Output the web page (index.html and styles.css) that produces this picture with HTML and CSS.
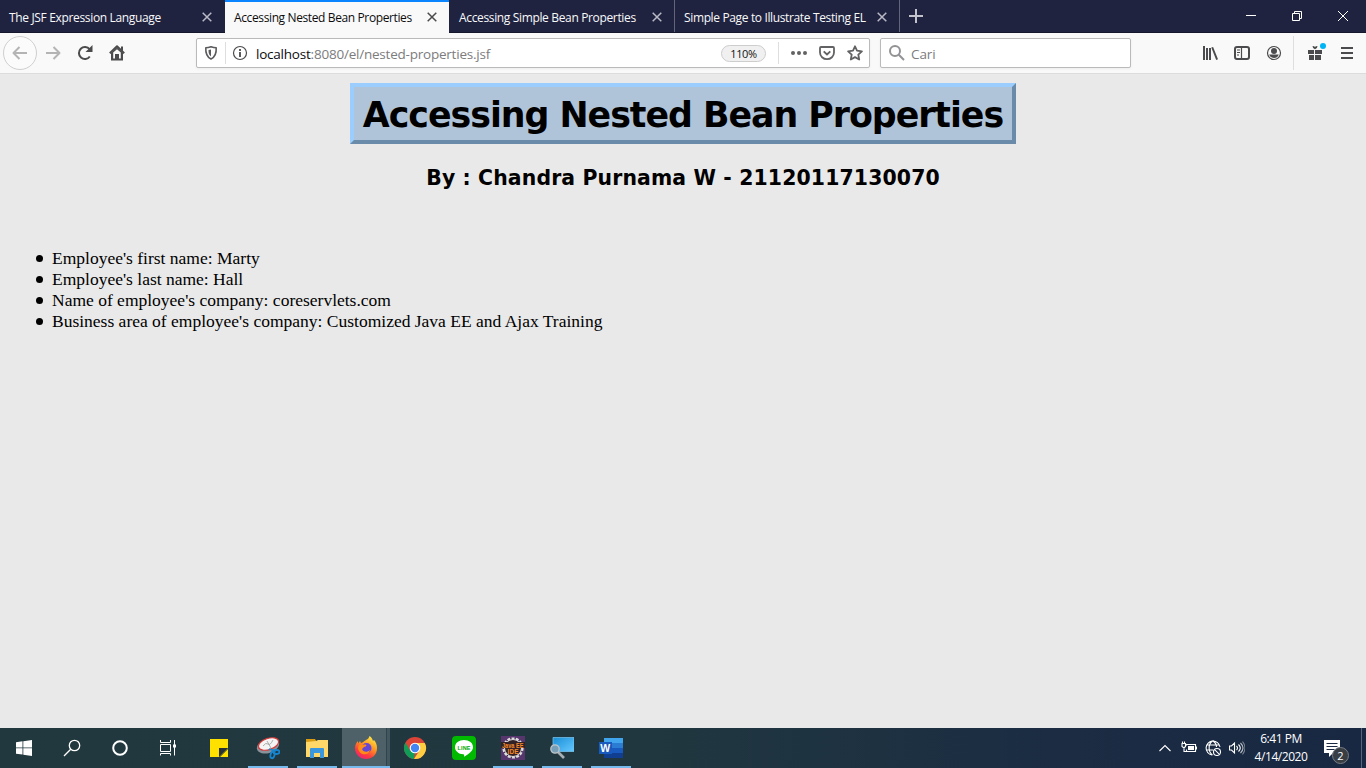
FILE: index.html
```html
<!DOCTYPE html>
<html lang="id">
<head>
<meta charset="utf-8">
<title>Accessing Nested Bean Properties</title>
<link rel="stylesheet" href="styles.css">
</head>
<body>
<header class="tabs">
  <div class="tab"><span class="tab-label t1">The JSF Expression Language</span><svg class="close" viewBox="0 0 10 10"><path d="M.7.7l8.600 8.600M9.300.7L.7 9.300"/></svg></div>
  <div class="tab active"><span class="tab-label t2">Accessing Nested Bean Properties</span><svg class="close" viewBox="0 0 10 10"><path d="M.7.7l8.600 8.600M9.300.7L.7 9.300"/></svg></div>
  <div class="tab"><span class="tab-label t3">Accessing Simple Bean Properties</span><svg class="close" viewBox="0 0 10 10"><path d="M.7.7l8.600 8.600M9.300.7L.7 9.300"/></svg></div>
  <div class="tab last"><span class="tab-label t4">Simple Page to Illustrate Testing EL</span><svg class="close" viewBox="0 0 10 10"><path d="M.7.7l8.600 8.600M9.300.7L.7 9.300"/></svg></div>
  <svg class="plus" viewBox="0 0 14 14"><path d="M7 0v14M0 7h14"/></svg>
  <div class="window-buttons">
    <svg viewBox="0 0 46 33"><path d="M18 15.500h10"/></svg>
    <svg viewBox="0 0 46 33"><path d="M18.500 13.500h7v7h-7zM20.500 13.500v-2h7v7h-2"/></svg>
    <svg viewBox="0 0 46 33"><path d="M18 11l10 10M28 11l-10 10"/></svg>
  </div>
</header>

<nav class="toolbar">
  <div class="nav-buttons">
    <span class="back"><svg class="i16" viewBox="0 0 16 16"><path class="line" d="M15 8H1.500M7.500 2L1.500 8l6 6"/></svg></span>
    <svg class="i16 faded" viewBox="0 0 16 16"><path class="line" d="M1 8h13.500M8.500 2l6 6-6 6"/></svg>
    <svg class="i16" viewBox="0 0 16 16"><path class="line" d="M12.800 11.500A6 6 0 1 1 12.600 4.200"/><path d="M15.500 0v7H8.500z"/></svg>
    <svg class="i16" viewBox="0 0 16 16"><path class="line" d="M.8 8.200L8 1.200l7.200 7"/><path fill-rule="evenodd" d="M2 8l6-5.500L14 8v7.500H2zM4.200 7.500v6H6V9h4v4.500h1.800v-6L8 4.300z"/><path d="M12 1.500h2v5l-2-2zM7 10.500h2v3H7z"/></svg>
  </div>
  <div class="urlbar">
    <svg class="i16 shield" viewBox="0 0 16 16"><path class="line" d="M8 1.800C6 2.500 4 2.800 2.800 2.800 2.500 8 3.500 12 8 14c4.500-2 5.500-6 5.200-11.200C12 2.800 10 2.500 8 1.800z"/><path d="M8 4.500v7C6 10 5.500 8.500 5.500 5 6.500 5 7.200 4.800 8 4.500z"/></svg>
    <span class="divider small"></span>
    <svg class="i16 info" viewBox="0 0 16 16"><circle class="thin" cx="8" cy="8" r="6.500"/><path d="M7 7h2v5H7zM7 4h2v2H7z"/></svg>
    <span class="url"><b>localhost</b>:8080/el/nested-properties.jsf</span>
    <span class="zoom"><span>110%</span></span>
    <span class="divider"></span>
    <svg class="i16 dots" viewBox="0 0 16 16"><circle cx="2" cy="8" r="2"/><circle cx="8" cy="8" r="2"/><circle cx="14" cy="8" r="2"/></svg>
    <svg class="i16 pocket" viewBox="0 0 16 16"><path class="line" d="M2 2h12q1 0 1 1v4.500a7 6.700 0 0 1-14 0V3q0-1 1-1z"/><path class="line" d="M4.700 6.300L8 9.500l3.300-3.200"/></svg>
    <svg class="i16 star" viewBox="0 0 16 16"><path class="line" d="M8 1.300l2 4.400 4.900.6-3.600 3.300.9 4.900L8 12.100l-4.200 2.400.9-4.900L1.100 6.300 6 5.700z"/></svg>
  </div>
  <div class="search">
    <svg class="i16 lens" viewBox="0 0 16 16"><circle class="line" cx="6" cy="6" r="5"/><path class="line" d="M9.800 9.800l5.200 5.200"/></svg>
    <span>Cari</span>
  </div>
  <div class="tools">
    <svg class="i16" viewBox="0 0 16 16"><path d="M1 1h2v14H1zM4 3h2v12H4zM7 3h2v12H7zM9.300 2.600l1.800-.6L16 14.300l-1.800.7z"/></svg>
    <svg class="i16" viewBox="0 0 16 16"><rect class="line" x="1" y="2" width="14" height="12" rx="2"/><path class="thin" d="M7.500 2v12M3 5h3M3 7.500h3M3 10h2"/></svg>
    <svg class="i16" viewBox="0 0 16 16"><circle class="thin" cx="8" cy="8" r="6.500"/><circle cx="8" cy="6" r="3"/><path d="M3.200 9.500h9.600C12 12 10 13 8 13s-4-1-4.800-3.500z"/></svg>
    <span class="divider tall"></span>
    <span class="gift"><svg class="i16" viewBox="0 0 16 16"><path d="M1 5h6v4H1zM8 5h7v4H8zM2 10h5v5H2zM8 10h6v5H8zM5.500 1q2 0 2.500 1 .5-1 2.500-1 0 2.500-2.500 3.200Q5.500 3.500 5.500 1z"/></svg></span>
    <svg class="i16" viewBox="0 0 16 16"><path class="line" d="M2 3h12M2 8h12M2 13h12"/></svg>
  </div>
</nav>

<main class="page">
  <h1 class="title"><span>Accessing Nested Bean Properties</span></h1>
  <h2 class="author">By : Chandra Purnama W - 21120117130070</h2>
  <ul class="facts">
    <li>Employee's first name: Marty</li>
    <li>Employee's last name: Hall</li>
    <li>Name of employee's company: coreservlets.com</li>
    <li>Business area of employee's company: Customized Java EE and Ajax Training</li>
  </ul>
</main>

<footer class="taskbar">
  <div class="system">
    <span class="task"><svg viewBox="0 0 24 24"><path fill="#fff" d="M4 6.200l6.500-.9v6.200H4zM11.300 5.200L20 4v7.500h-8.700zM4 12.300h6.500v6.300L4 17.700zM11.300 12.300H20V20l-8.700-1.200z"/></svg></span>
    <span class="task"><svg viewBox="0 0 24 24"><g fill="none" stroke="#fff" stroke-width="1.300"><circle cx="14.500" cy="9.500" r="5.200"/><path d="M10.700 13.300L4 20"/></g></svg></span>
    <span class="task"><svg viewBox="0 0 24 24"><circle cx="12" cy="12" r="6.800" fill="none" stroke="#fff" stroke-width="2"/></svg></span>
    <span class="task"><svg viewBox="0 0 24 24"><path fill="none" stroke="#fff" d="M4.500 4v2.500h10V4M4.500 19.500V17.500h10v2M4.500 8.500h10v7h-10zM18.500 4v15.500"/><path fill="#fff" d="M17 8.500h3v3h-3z"/></svg></span>
  </div>
  <div class="apps">
    <span class="task"><svg viewBox="0 0 24 24"><path fill="#ffe100" d="M3 3h18v9l-9 9H3z"/><path fill="#263238" d="M12 12h9l-9 9z"/><path fill="#ffe100" d="M13 21l8-8v8z"/></svg></span>
    <span class="task running"><svg viewBox="0 0 24 24"><ellipse cx="12" cy="10" rx="11.500" ry="7" transform="rotate(-18 12 10)" fill="#87929a"/><ellipse cx="12.500" cy="8" rx="10.500" ry="5.600" transform="rotate(-18 12.500 8)" fill="#f4f4f4" stroke="#d43b3b" stroke-width="1.200"/><path d="M7 10q3-4 5-2t5-4M11 5l4 7" fill="none" stroke="#999" stroke-width=".8"/><g fill="none" stroke="#1685cf" stroke-width="1.800"><path d="M13 13l7 2"/><ellipse cx="16.500" cy="19" rx="2" ry="3.300" transform="rotate(15 16.500 19)"/><ellipse cx="20.500" cy="16" rx="3" ry="2"/></g></svg></span>
    <span class="task running"><svg viewBox="0 0 24 24"><path fill="#d99b12" d="M1 3h9l2 3H1z"/><path fill="#ffd869" d="M1 6l10-1 2-1h10v17H1z"/><path fill="#3a96dd" d="M5 13q0-1 1-1h12q1 0 1 1v9h-4v-5H9v5H5z"/></svg></span>
    <span class="task running current"><svg viewBox="0 0 24 24"><defs><linearGradient id="fx" x1=".8" y1="0" x2=".25" y2="1"><stop offset="0" stop-color="#fff04a"/><stop offset=".4" stop-color="#ff9a20"/><stop offset=".75" stop-color="#ff3b3f"/><stop offset="1" stop-color="#e92278"/></linearGradient></defs><path fill="url(#fx)" d="M12 4c2-1 3-2 3.500-4 3 2 3 4 3.500 5l1-1c2 2 3 5 3 8 0 7-5 11-11 11S1 18.500 1 12c0-3 1-5 3-7v2.500L6 5l1 2c1 0 3-2 5-3z"/><circle cx="12.500" cy="12" r="5" fill="#6547d5"/><path fill="#ff8b19" d="M5 9l6-.5c2 0 2 2-1 2.500l-2 2c1 3 5 4 8 1-1 6-11 6-12-2z"/></svg></span>
    <span class="task"><svg viewBox="0 0 24 24"><circle cx="12" cy="12" r="11" fill="#db4437"/><path fill="#0f9d58" d="M2.500 6.500L7.200 14.800 12 17l-1 6A11 11 0 0 1 2.500 6.500z"/><path fill="#ffcd40" d="M12 7h9.800A11 11 0 0 1 11 23l5.500-8.500z"/><circle cx="12" cy="12" r="5.300" fill="#fff"/><circle cx="12" cy="12" r="4.200" fill="#4285f4"/></svg></span>
    <span class="task"><svg viewBox="0 0 24 24"><rect width="24" height="24" rx="4" fill="#00b900"/><path fill="#fff" d="M12 4c5.300 0 9 3 9 7.200 0 4-5.500 7.500-9 9.500.4-1.500.4-2.200-.8-2.400C6.500 18 3 15 3 11.200 3 7 7 4 12 4z"/><text class="line-logo" x="5.500" y="13.500" textLength="13">LINE</text></svg></span>
    <span class="task running"><svg viewBox="0 0 24 24"><rect width="24" height="24" fill="#57366e"/><circle cx="12" cy="12" r="9.500" fill="#332128" stroke="#ddd" stroke-width="2.200" stroke-dasharray="3 1.300"/><circle cx="12" cy="12" r="8.500" fill="none" stroke="#ddd"/><path fill="#332128" d="M0 6h24v6H0z"/><text class="ide-logo" x="1" y="11.500" textLength="21.500" lengthAdjust="spacingAndGlyphs">Java EE</text><text class="ide-logo" x="6.500" y="17.500" textLength="11">IDE</text></svg></span>
    <span class="task running"><svg viewBox="0 0 24 24"><defs><linearGradient id="screen" x2="1" y2="1"><stop stop-color="#198ed7"/><stop offset="1" stop-color="#66c8ff"/></linearGradient></defs><path fill="url(#screen)" stroke="#7bc9f2" stroke-width=".7" d="M3 1.500h21v14H3z"/><path d="M8 16l6 6" stroke="#a8afb3" stroke-width="2.600"/><circle cx="5" cy="13" r="4.200" fill="#779fb8" stroke="#bdc5ca" stroke-width="1.300"/></svg></span>
    <span class="task running"><svg viewBox="0 0 24 24"><path fill="#41a5ee" d="M5 2h19v5H5z"/><path fill="#2b7cd3" d="M5 7h19v5H5z"/><path fill="#185abd" d="M5 12h19v5H5z"/><path fill="#103f91" d="M5 17h19v5H5z"/><path fill="#185abd" d="M0 6h13v12H0z"/><text class="word-logo" x="1.200" y="15.700" textLength="10.500">W</text></svg></span>
  </div>
  <div class="tray">
    <svg class="i16" viewBox="0 0 16 16"><path d="M2.500 11L8 5.500l5.500 5.500"/></svg>
    <svg class="i16" viewBox="0 0 16 16"><path d="M5.500 5.500v-1h9v7h-9v-2M.5 3.500h4v3L3 8 1 6.500v-3M1.500 1.500v2M3.500 1.500v2M3 8v3.500h2.500"/><path fill="#fff" stroke="none" d="M7 6h6v4H7zM15 6.500h1v3h-1z"/></svg>
    <svg class="i16" viewBox="0 0 16 16"><path d="M7 15A7 7 0 1 1 15 7M7.500 1C3 4 3 12 7.500 15M8 1c3 2 3.500 4 3.500 6M1.500 5h13M1 10h7"/><circle cx="12" cy="12" r="3.500"/><path d="M9.600 9.600l4.800 4.800"/></svg>
    <svg class="i16" viewBox="0 0 16 16"><path d="M.5 6h2l3-3v10l-3-3h-2zM7.500 6q2 2 0 4M9.500 4.500q3.500 3.500 0 7"/><path opacity=".7" d="M11.500 3q5 5 0 10"/><path opacity=".4" d="M13.500 1.500q5 6.500 0 13"/></svg>
    <div class="clock"><span>6:41 PM</span><span>4/14/2020</span></div>
    <span class="notice"><svg viewBox="0 0 24 24"><path fill="#fff" d="M0 0h16v13H9l-4 4v-4H0z"/><path stroke="#1b2a43" d="M2.500 3.500h11M2.500 6.500h11M2.500 9.500h8"/></svg><b>2</b></span>
    <span class="desktop-edge"></span>
  </div>
</footer>
</body>
</html>
```

FILE: styles.css
```css
* { box-sizing: border-box; }
body { margin: 0; width: 1366px; height: 768px; overflow: hidden; display: flex; flex-direction: column; background: #e9e9e9; font-family: "Open Sans", "Noto Sans", sans-serif; }
svg { display: block; flex: none; }
.i16 { width: 16px; height: 16px; fill: #4b4b4d; }
.line { fill: none; stroke: #4b4b4d; stroke-width: 2; stroke-linejoin: round; }
.thin { fill: none; stroke: #4b4b4d; stroke-width: 1.2; }

.tabs { height: 33px; display: flex; background: #202340; color: #f9f9fa; border-bottom: 1px solid #15172c; }
.tab { width: 225px; height: 32px; padding: 3px 13px 0 9px; display: flex; align-items: center; justify-content: space-between; font-size: 12px; white-space: nowrap; }
.tab.active { width: 224px; height: 33px; padding: 0 12px 0 9px; border-top: 2px solid #0a84ff; background: #f9f9f9; color: #0c0c0d; }
.tab:nth-child(3), .tab:nth-child(4) { border-right: 1px solid #64657a; }
.tab:nth-child(3) { width: 226px; padding-left: 10px; padding-right: 12px; }
.tab.last { padding-right: 12px; }
.close { width: 10px; height: 10px; margin-top: -1px; stroke: #b9bac5; stroke-width: 1.5; }
.active .close { stroke: #4b4b4d; }
.t1 { letter-spacing: -.34px; }
.t2 { letter-spacing: -.38px; }
.t3 { letter-spacing: -.35px; }
.t4 { letter-spacing: -.36px; }
.plus { width: 14px; height: 14px; margin: 9px 0 0 9px; stroke: #c1c2cc; stroke-width: 2; }
.window-buttons { margin-left: auto; display: flex; }
.window-buttons svg { width: 46px; height: 33px; fill: none; stroke: #fff; stroke-width: 1; }

.toolbar { height: 41px; padding-left: 3px; display: flex; align-items: flex-start; background: #f9f9f9; border-bottom: 1px solid #dcdcdc; }
.nav-buttons { width: 193px; height: 40px; display: flex; align-items: center; gap: 16px; }
.back { width: 34px; height: 34px; margin-right: -8px; border: 1px solid #cfcfcf; border-radius: 50%; display: grid; place-items: center; background: #fbfbfb; }
.back .line, .faded .line { stroke: #b4b4b5; }
.urlbar, .search { height: 30px; margin-top: 5px; display: flex; align-items: center; background: #fff; border: 1px solid #bababa; border-radius: 2px; box-shadow: 0 1px 3px #0000000d; }
.urlbar { width: 674px; padding: 0 6px; }
.divider { width: 1px; height: 22px; background: #dedede; flex: none; }
.divider.small { margin: 0 6px 0 6px; }
.urlbar .info, .urlbar .shield { fill: #5b5b5d; }
.shield .line { stroke: #5b5b5d; stroke-width: 1.6; }
.url { margin-left: 8px; color: #7c7c7e; font-size: 13.5px; letter-spacing: -.22px; white-space: nowrap; padding-top: 1px; }
.url b { font-weight: 400; color: #0c0c0d; }
.zoom { width: 45px; height: 17px; margin: 0 12px 0 auto; border: 1px solid #cdcdcd; border-radius: 9px; background: #f0f0f0; color: #111; display: grid; place-items: center; font-size: 11px; letter-spacing: -.35px; line-height: 15px; }
.dots { margin: 0 12px; }
.dots, .pocket, .star { fill: #626264; }
.pocket .line, .star .line { stroke: #626264; stroke-width: 1.8; }
.star { margin-left: 12px; }
.search { width: 251px; margin-left: 10px; padding-left: 8px; gap: 6px; color: #7c7c7e; font-size: 13.5px; letter-spacing: -.1px; }
.search span { padding-top: 1px; }
.search .line { stroke: #929294; }
.tools { height: 40px; margin-left: 71px; display: flex; align-items: center; gap: 16px; }
.divider.tall { height: 34px; margin: 0 -3px 0 -5px; }
.gift { position: relative; }
.gift::after { content: ""; position: absolute; right: -3px; top: -2px; width: 6px; height: 6px; border-radius: 50%; background: #00b3f4; }

.page { flex: 1; padding-top: 9px; font-family: "Liberation Serif", serif; color: #000; }
.title { width: 666px; height: 61px; margin: 0 auto; padding-top: 2px; border: 4px solid; border-color: #9bceff #6a8baa #6a8baa #9bceff; background: #b0c4d9; font: bold 34.8px/53px "DejaVu Sans", sans-serif; letter-spacing: -1.03px; text-align: center; white-space: nowrap; }
.author { margin: 20px 0 0; text-align: center; font: bold 20.4px/28px "DejaVu Sans", sans-serif; letter-spacing: .14px; }
.facts { margin: 56px 0 0; padding-left: 36px; list-style: none; font-size: 17.5px; line-height: 21px; }
.facts li { display: flex; align-items: center; gap: 9px; }
.facts li::before { content: ""; width: 7px; height: 7px; border-radius: 50%; background: #000; }

.taskbar { height: 40px; display: flex; background: linear-gradient(90deg, #22383f 0%, #20373f 48%, #1b2c43 78%, #182842 100%); color: #fff; }
.system { width: 195px; display: flex; }
.apps { display: flex; gap: 1px; }
.task { width: 48px; height: 40px; display: grid; place-items: center; }
.task svg { width: 24px; height: 24px; }
.running { background: linear-gradient(#76b9ed, #76b9ed) 50% 100% / 40px 2px no-repeat; }
.current { background: linear-gradient(#76b9ed, #76b9ed) 50% 100% / 48px 2px no-repeat, linear-gradient(90deg, #4e6168 44px, #2f454d 44px, #2f454d 45px, #43575f 45px); }
.line-logo, .ide-logo, .word-logo { font-family: "Liberation Sans", sans-serif; font-weight: bold; }
.line-logo { font-size: 5.5px; fill: #00a900; }
.ide-logo { font-size: 6.5px; fill: #f78b28; }
.word-logo { font-size: 10.5px; fill: #fff; }
.tray { margin-left: auto; display: flex; align-items: center; gap: 8px; }
.tray .i16 { fill: none; stroke: #fff; stroke-width: 1.1; }
.clock { width: 58px; margin-left: -1px; display: flex; flex-direction: column; align-items: center; font-size: 12px; line-height: 18px; letter-spacing: -.45px; white-space: nowrap; }
.notice { position: relative; width: 24px; height: 24px; margin-left: 6px; margin-top: 8px; }
.notice svg { width: 24px; height: 24px; }
.notice b { position: absolute; left: 8px; top: 7px; width: 17px; height: 17px; border: 1px solid #777d84; border-radius: 50%; background: #393e45; font-size: 11px; line-height: 15px; text-align: center; font-weight: 400; }
.desktop-edge { width: 5px; height: 40px; margin-left: 5px; border-left: 1px solid #58657a; }
```
